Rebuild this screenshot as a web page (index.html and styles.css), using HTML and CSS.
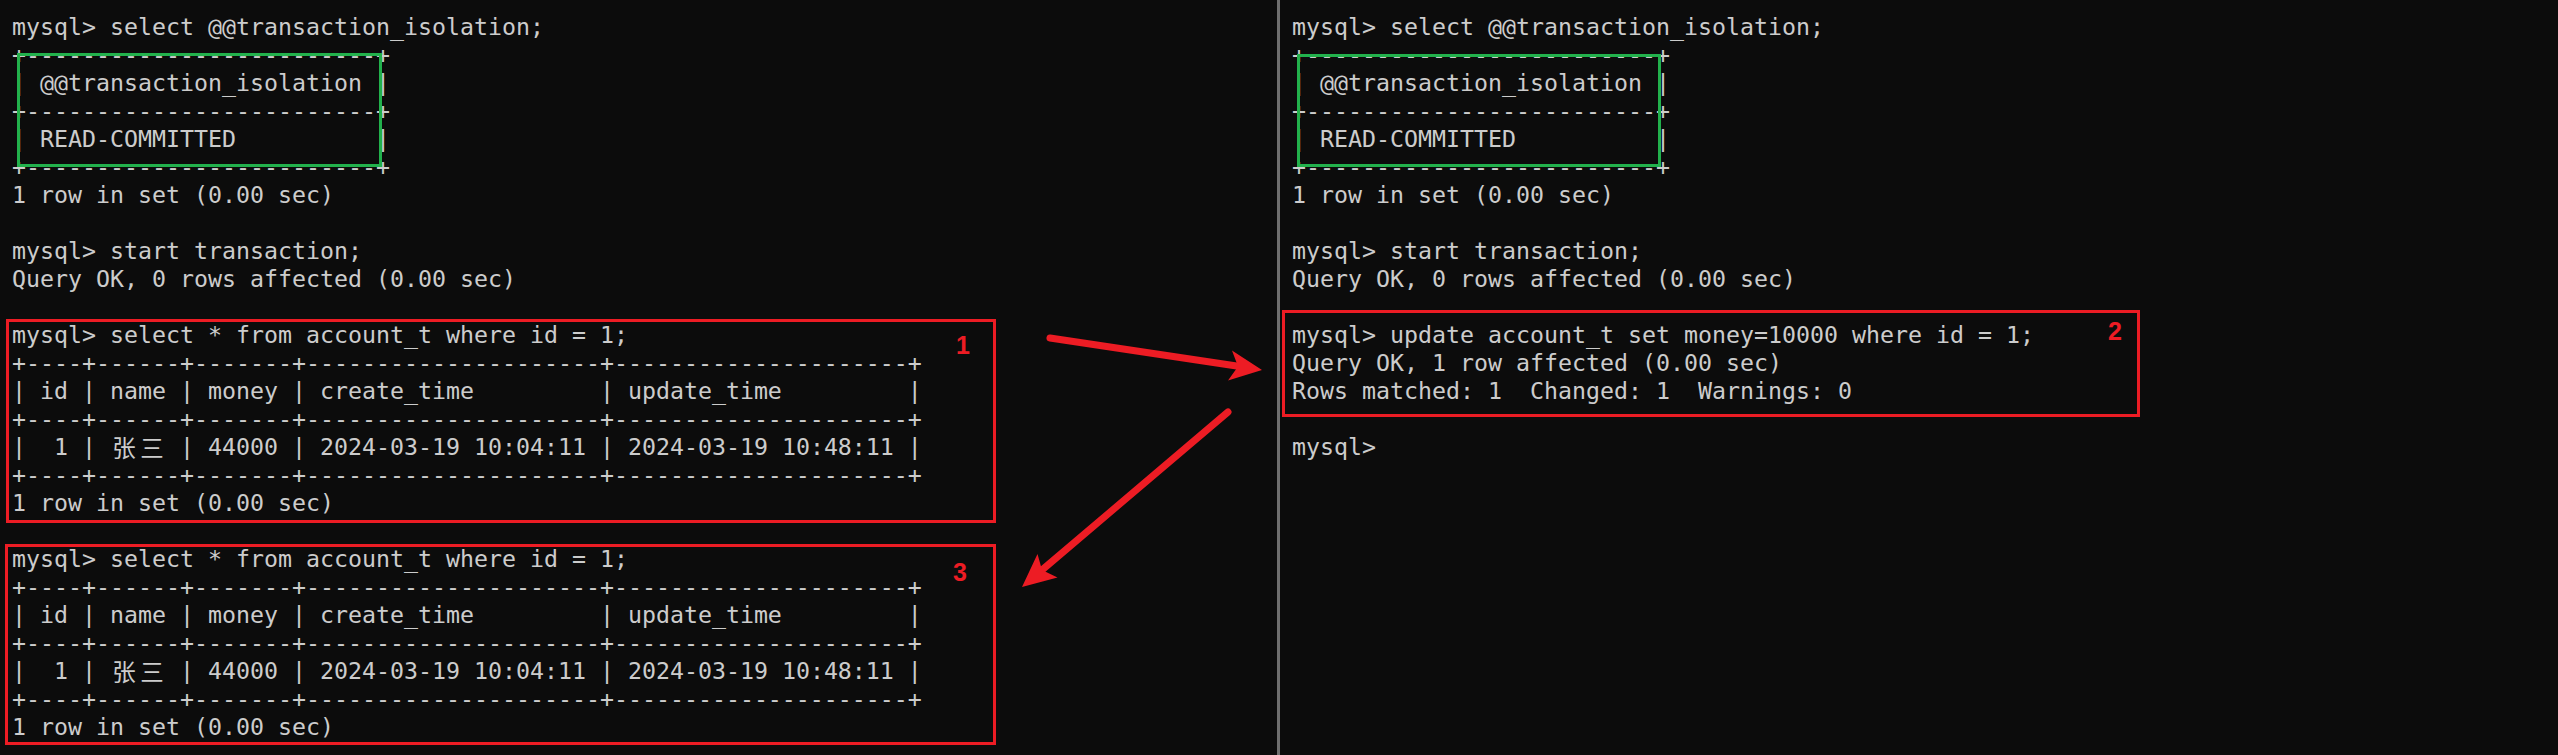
FILE: index.html
```html
<!DOCTYPE html>
<html lang="zh-CN">
<head>
<meta charset="utf-8">
<title>mysql transaction isolation</title>
<link rel="stylesheet" href="styles.css">
</head>
<body>
<div class="screen">
  <section class="pane pane-left">
    <div class="ln">mysql&gt; select @@transaction_isolation;</div>
    <div class="ln">+-------------------------+</div>
    <div class="ln">| @@transaction_isolation |</div>
    <div class="ln">+-------------------------+</div>
    <div class="ln">| READ-COMMITTED          |</div>
    <div class="ln">+-------------------------+</div>
    <div class="ln">1 row in set (0.00 sec)</div>
    <div class="ln"></div>
    <div class="ln">mysql&gt; start transaction;</div>
    <div class="ln">Query OK, 0 rows affected (0.00 sec)</div>
    <div class="ln"></div>
    <div class="ln">mysql&gt; select * from account_t where id = 1;</div>
    <div class="ln">+----+------+-------+---------------------+---------------------+</div>
    <div class="ln">| id | name | money | create_time         | update_time         |</div>
    <div class="ln">+----+------+-------+---------------------+---------------------+</div>
    <div class="ln">|  1 | <span class="cjk">张</span><span class="cjk">三</span> | 44000 | 2024-03-19 10:04:11 | 2024-03-19 10:48:11 |</div>
    <div class="ln">+----+------+-------+---------------------+---------------------+</div>
    <div class="ln">1 row in set (0.00 sec)</div>
    <div class="ln"></div>
    <div class="ln">mysql&gt; select * from account_t where id = 1;</div>
    <div class="ln">+----+------+-------+---------------------+---------------------+</div>
    <div class="ln">| id | name | money | create_time         | update_time         |</div>
    <div class="ln">+----+------+-------+---------------------+---------------------+</div>
    <div class="ln">|  1 | <span class="cjk">张</span><span class="cjk">三</span> | 44000 | 2024-03-19 10:04:11 | 2024-03-19 10:48:11 |</div>
    <div class="ln">+----+------+-------+---------------------+---------------------+</div>
    <div class="ln">1 row in set (0.00 sec)</div>
  </section>
  <div class="divider"></div>
  <section class="pane pane-right">
    <div class="ln">mysql&gt; select @@transaction_isolation;</div>
    <div class="ln">+-------------------------+</div>
    <div class="ln">| @@transaction_isolation |</div>
    <div class="ln">+-------------------------+</div>
    <div class="ln">| READ-COMMITTED          |</div>
    <div class="ln">+-------------------------+</div>
    <div class="ln">1 row in set (0.00 sec)</div>
    <div class="ln"></div>
    <div class="ln">mysql&gt; start transaction;</div>
    <div class="ln">Query OK, 0 rows affected (0.00 sec)</div>
    <div class="ln"></div>
    <div class="ln">mysql&gt; update account_t set money=10000 where id = 1;</div>
    <div class="ln">Query OK, 1 row affected (0.00 sec)</div>
    <div class="ln">Rows matched: 1  Changed: 1  Warnings: 0</div>
    <div class="ln"></div>
    <div class="ln">mysql&gt; </div>
  </section>

  <div class="annot">
    <div class="frame green g-left"></div>
    <div class="frame green g-right"></div>
    <div class="frame red r1"><span class="num n1">1</span></div>
    <div class="frame red r2"><span class="num n2">2</span></div>
    <div class="frame red r3"><span class="num n3">3</span></div>
    <svg class="arrows" width="2558" height="755" viewBox="0 0 2558 755">
      <line x1="1050" y1="338" x2="1240" y2="366.5" stroke="#ed1c24" stroke-width="7" stroke-linecap="round"/>
      <polygon points="1262,370 1232,350.5 1238,366.4 1228,380.5" fill="#ed1c24"/>
      <line x1="1228" y1="412" x2="1042" y2="570" stroke="#ed1c24" stroke-width="7" stroke-linecap="round"/>
      <polygon points="1022,587 1037.5,554 1042,570 1057.5,577.5" fill="#ed1c24"/>
    </svg>
  </div>
</div>
</body>
</html>
```

FILE: styles.css
```css
* {
  box-sizing: border-box;
}

html, body {
  margin: 0;
  padding: 0;
  background: #0c0c0c;
}

.screen {
  position: relative;
  display: flex;
  width: 2558px;
  height: 755px;
  background: #0c0c0c;
  overflow: hidden;
}

.pane {
  display: flex;
  flex-direction: column;
  padding: 13px 0 0 12px;
  color: #cccccc;
  font-family: "DejaVu Sans Mono", "Noto Sans CJK SC", monospace;
  font-size: 23.25px;
  line-height: 28px;
}

.pane-left {
  width: 1277px;
  flex: none;
}

.pane-right {
  flex: 1;
}

.divider {
  width: 3px;
  flex: none;
  background: #6f6f6f;
}

.ln {
  height: 28px;
  white-space: pre;
}

.cjk {
  display: inline-block;
  width: 28px;
  text-align: center;
  font-family: "Noto Sans CJK SC", sans-serif;
  font-size: 23.5px;
  line-height: 28px;
  height: 28px;
  vertical-align: top;
}

.annot {
  position: absolute;
  inset: 0;
  pointer-events: none;
}

.frame {
  position: absolute;
  border-style: solid;
  border-width: 3px;
}

.green {
  border-color: #22b14c;
}

.red {
  border-color: #ed1c24;
}

.g-left {
  left: 17px;
  top: 53px;
  width: 365px;
  height: 114px;
}

.g-right {
  left: 1297px;
  top: 54px;
  width: 364px;
  height: 113px;
}

.r1 {
  left: 6px;
  top: 319px;
  width: 990px;
  height: 204px;
}

.r2 {
  left: 1282px;
  top: 310px;
  width: 858px;
  height: 107px;
}

.r3 {
  left: 5px;
  top: 544px;
  width: 991px;
  height: 201px;
}

.num {
  position: absolute;
  color: #ed1c24;
  font-family: "Liberation Sans", Arial, sans-serif;
  font-weight: bold;
  font-size: 25px;
  line-height: 25px;
}

.n1 {
  left: 947px;
  top: 11px;
}

.n2 {
  left: 823px;
  top: 6px;
}

.n3 {
  left: 945px;
  top: 13px;
}

.arrows {
  position: absolute;
  left: 0;
  top: 0;
}
```
